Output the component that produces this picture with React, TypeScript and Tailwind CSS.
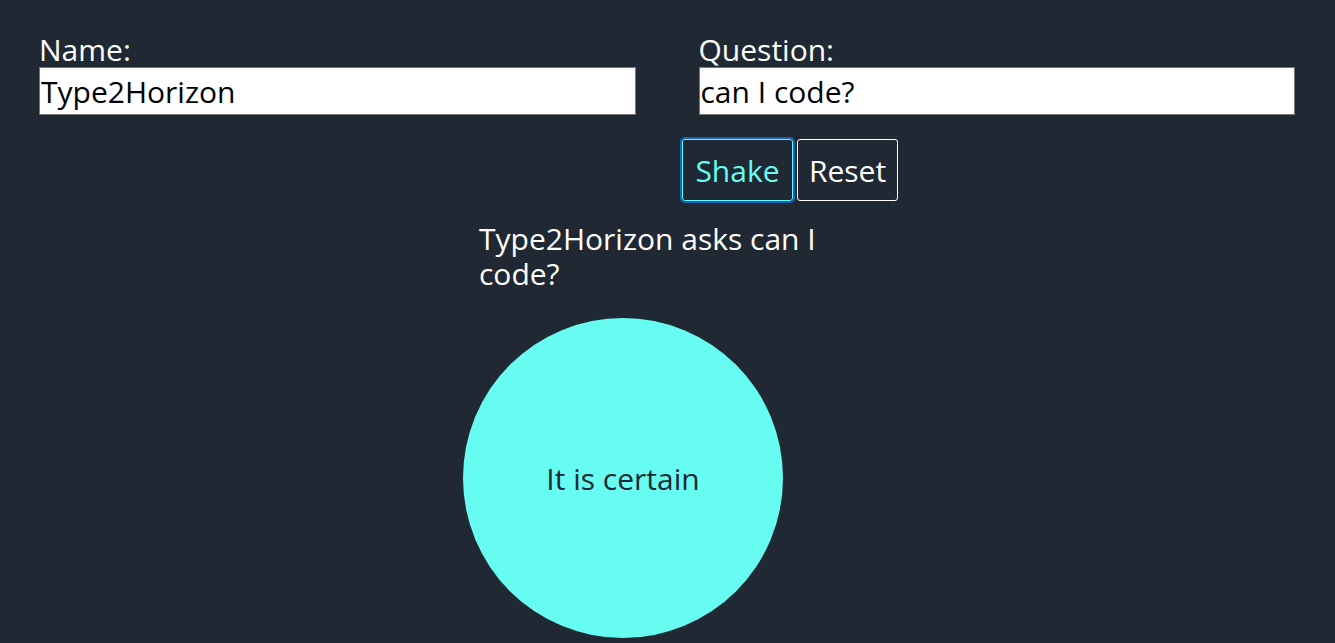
const font = { fontFamily: '"Segoe UI", "Open Sans", "Noto Sans", sans-serif' };

function Field({ label, value }: { label: string; value: string }) {
  return (
    <label className="flex flex-col">
      <span className="text-[30px] leading-[35px] text-white">{label}</span>
      <input
        readOnly
        value={value}
        className="h-[48px] w-full border border-[#767676] bg-white px-[1px] text-[30px] text-black outline-none"
      />
    </label>
  );
}

export default function App() {
  return (
    <div
      className="min-h-screen bg-[#1f2833] pl-[39px] pr-10 pt-[32px] text-white"
      style={font}
    >
      <div className="grid grid-cols-2 gap-x-[63px]">
        <Field label="Name:" value="Type2Horizon" />
        <Field label="Question:" value="can I code?" />
      </div>

      <div className="ml-[643px] mt-[24px] flex gap-[4px]">
        <button
          type="button"
          className="h-[62px] w-[111px] rounded-[3px] border border-[#66fcf1] text-[30px] text-[#66fcf1] outline outline-2 outline-[#1565c0]"
        >
          Shake
        </button>
        <button
          type="button"
          className="h-[62px] w-[101px] rounded-[3px] border border-white text-[30px] text-white"
        >
          Reset
        </button>
      </div>

      <p className="ml-[440px] mt-[20px] w-[360px] text-[30px] leading-[35px]">
        Type2Horizon asks can I code?
      </p>

      <div className="ml-[424px] mt-[27px] flex h-80 w-80 items-center justify-center rounded-full bg-[#66fcf1] text-[30px] text-[#1f2833]">
        It is certain
      </div>
    </div>
  );
}
